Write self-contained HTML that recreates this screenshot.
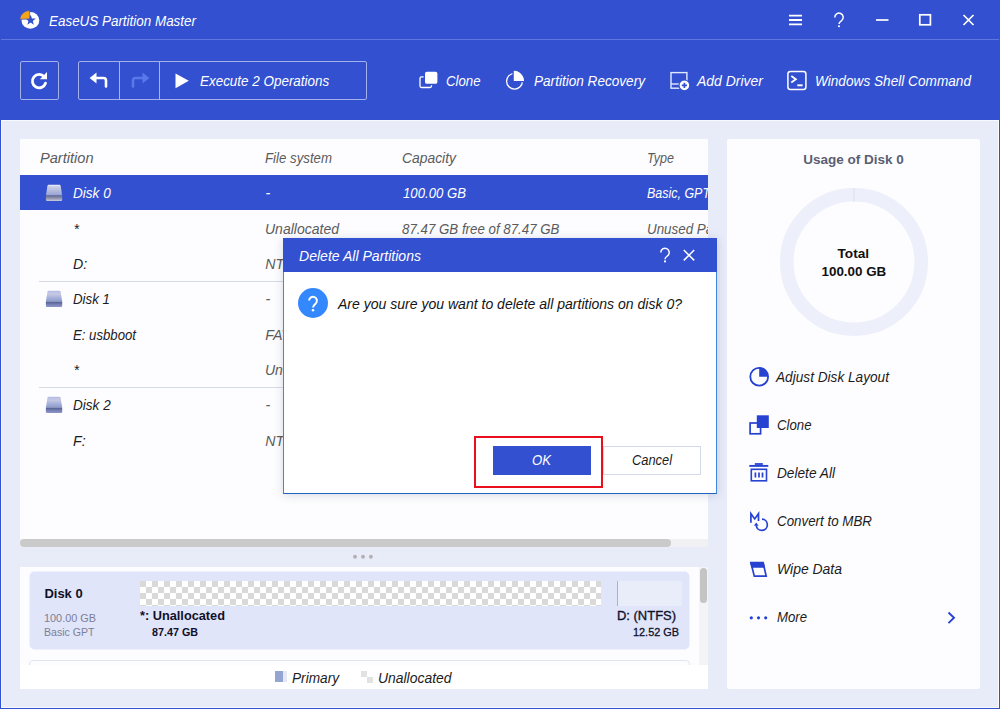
<!DOCTYPE html>
<html>
<head>
<meta charset="utf-8">
<title>EaseUS Partition Master</title>
<style>
*{box-sizing:border-box;margin:0;padding:0}
html,body{width:1000px;height:709px;overflow:hidden}
body{font-family:"Liberation Sans",sans-serif;background:#e8ebf8;position:relative;color:#222}
.abs{position:absolute}
.t{position:absolute;white-space:nowrap;line-height:16px}
.tb{position:absolute;border:1px solid #a3b0ea;border-radius:2px}
.panel{position:absolute;background:#fdfdff}
.dk{position:absolute;width:16px;height:16px;background:linear-gradient(#c9cee8 0%,#b3bade 30%,#8d98c8 62%,#7480b6 72%,#5f6ba3 77%,#8993c3 84%,#7b86b9 100%);border-radius:4px 4px 2px 2px}
.dk.sel{background:linear-gradient(#ced2e2 0%,#b9bed2 30%,#979db8 62%,#868ca8 72%,#71779a 77%,#9aa0bb 84%,#8b91ad 100%)}
.sep{position:absolute;left:39px;width:669px;height:1px;background:#d5dbe6}
</style>
</head>
<body>
<svg width="0" height="0" style="position:absolute">
  <defs>
    <linearGradient id="dt" x1="0" y1="0" x2="0" y2="1"><stop offset="0" stop-color="#b4bbe6"/><stop offset="0.3" stop-color="#c6c9e2"/><stop offset="0.65" stop-color="#a6b0d9"/><stop offset="1" stop-color="#8a9acf"/></linearGradient>
    <linearGradient id="df" x1="0" y1="0" x2="0" y2="1"><stop offset="0" stop-color="#525e8c"/><stop offset="0.3" stop-color="#626ea3"/><stop offset="0.65" stop-color="#7d87ba"/><stop offset="1" stop-color="#8c95c6"/></linearGradient>
    <linearGradient id="st" x1="0" y1="0" x2="0" y2="1"><stop offset="0" stop-color="#eff1fa"/><stop offset="0.18" stop-color="#c9cde6"/><stop offset="0.6" stop-color="#b0b8dc"/><stop offset="1" stop-color="#94a1d2"/></linearGradient>
    <linearGradient id="sf" x1="0" y1="0" x2="0" y2="1"><stop offset="0" stop-color="#666d8e"/><stop offset="0.35" stop-color="#80869f"/><stop offset="0.7" stop-color="#a4a9c0"/><stop offset="1" stop-color="#cacddf"/></linearGradient>
  </defs>
</svg>
<div class="abs" style="left:0;top:0;width:1000px;height:120px;background:#3350d0"></div>
<div class="abs" style="left:0;top:39px;width:1000px;height:1px;background:#5f77dc"></div>

<!-- title -->
<svg class="abs" style="left:18px;top:9px" width="22" height="21" viewBox="-2 -1 22 21">
  <ellipse cx="10.400" cy="10.400" rx="8.900" ry="8.400" fill="#fff"/>
  <path d="M10.60 4.80 L11.95 8.44 L15.83 8.60 L12.79 11.01 L13.83 14.75 L10.60 12.60 L7.37 14.75 L8.41 11.01 L5.37 8.60 L9.25 8.44z" fill="#3350d0"/>
  <path d="M9.500 8.900L-0.300 9.400A9.700 9.700 0 0 1 9.800 0.600z" fill="#f7a416" stroke="#3350d0" stroke-width="0.700"/>
</svg>
<div class="t" style="left:49.00px;top:12.58px;font-size:14.2px;font-style:italic;color:#fff;transform:scaleX(0.9463);transform-origin:0 50%;">EaseUS Partition Master</div>

<!-- window controls -->
<svg class="abs" style="left:780px;top:8px" width="210" height="24" viewBox="0 0 210 24" fill="none" stroke="#fff" stroke-width="1.6">
  <path d="M9 7.600h13M9 12h13M9 16.400h13" stroke-width="1.900"/>
  <path d="M54.800 9.400A4.200 4.200 0 1 1 61.700 12.500C60.200 13.600 59 14.300 59 16" stroke-width="1.500"/>
  <circle cx="59" cy="18.200" r="1.050" fill="#fff" stroke="none"/>
  <path d="M96 12h12.500" stroke-width="1.700"/>
  <rect x="139.800" y="6.800" width="10.600" height="10" stroke-width="1.700"/>
  <path d="M183.500 7l10 10M193.500 7l-10 10" stroke-width="1.700"/>
</svg>

<!-- toolbar -->
<div class="tb" style="left:20px;top:61px;width:39px;height:39px"></div>
<div class="tb" style="left:78px;top:61px;width:289px;height:39px"></div>
<div class="abs" style="left:119px;top:62px;width:1px;height:37px;background:#a9b6ec"></div>
<div class="abs" style="left:159px;top:62px;width:1px;height:37px;background:#a9b6ec"></div>
<svg class="abs" style="left:28px;top:69px" width="24" height="24" viewBox="0 0 24 24" fill="none">
  <path d="M16.300 7.900A6.700 6.700 0 1 0 17.500 14.200" stroke="#fff" stroke-width="2.800" stroke-linecap="round"/>
  <path d="M19 3v7.200h-7.200z" fill="#fff"/>
</svg>
<svg class="abs" style="left:86px;top:69px" width="28" height="24" viewBox="0 0 28 24" fill="none">
  <path d="M9 9h8.500a2.500 2.500 0 0 1 2.500 2.500V17.500" stroke="#fff" stroke-width="2.600" stroke-linecap="round"/>
  <path d="M3.600 9L10.500 3.500v11z" fill="#fff"/>
</svg>
<svg class="abs" style="left:126px;top:69px" width="28" height="24" viewBox="0 0 28 24" fill="none">
  <path d="M18 9H9.500a2.500 2.500 0 0 0-2.500 2.500V17.500" stroke="#5b78ea" stroke-width="2.600" stroke-linecap="round"/>
  <path d="M23.400 9L16.500 3.500v11z" fill="#5b78ea"/>
</svg>
<svg class="abs" style="left:175px;top:73px" width="15" height="16" viewBox="0 0 15 16"><path d="M0.500 0.500L13.800 7.800L0.500 15.200z" fill="#fff"/></svg>
<div class="t" style="left:199.50px;top:72.58px;font-size:14.2px;font-style:italic;color:#fff;transform:scaleX(0.9470);transform-origin:0 50%;">Execute 2 Operations</div>

<svg class="abs" style="left:418px;top:70px" width="22" height="22" viewBox="0 0 22 22" fill="none">
  <rect x="2" y="6.900" width="11.500" height="10.600" rx="1.500" stroke="#fff" stroke-width="1.300"/>
  <rect x="6.300" y="1" width="13.800" height="13.500" rx="2.600" fill="#fff" stroke="#3350d0" stroke-width="1.400"/>
</svg>
<div class="t" style="left:446.00px;top:72.58px;font-size:14.2px;font-style:italic;color:#fff;transform:scaleX(0.9305);transform-origin:0 50%;">Clone</div>

<svg class="abs" style="left:504px;top:69px" width="24" height="24" viewBox="0 0 24 24" fill="none">
  <circle cx="10.500" cy="12.200" r="7.900" stroke="#fff" stroke-width="1.300"/>
  <path d="M9.100 12.600V0.900A11.700 11.700 0 0 1 20.800 12.600z" fill="#fff" stroke="#3350d0" stroke-width="1.300"/>
</svg>
<div class="t" style="left:533.60px;top:72.58px;font-size:14.2px;font-style:italic;color:#fff;transform:scaleX(0.9575);transform-origin:0 50%;">Partition Recovery</div>

<svg class="abs" style="left:668px;top:69px" width="24" height="24" viewBox="0 0 24 24" fill="none">
  <rect x="3" y="3.600" width="15.900" height="15.600" stroke="#e4e8fb" stroke-width="1.400"/>
  <path d="M3 15h15.900" stroke="#e4e8fb" stroke-width="1.400"/>
  <circle cx="16.400" cy="16.400" r="5.400" fill="#fff" stroke="#3350d0" stroke-width="1.200"/>
  <path d="M16.400 13.800v5.200M13.800 16.400h5.200" stroke="#3350d0" stroke-width="1.700"/>
</svg>
<div class="t" style="left:697.00px;top:72.58px;font-size:14.2px;font-style:italic;color:#fff;transform:scaleX(0.9846);transform-origin:0 50%;">Add Driver</div>

<svg class="abs" style="left:785px;top:68px" width="24" height="24" viewBox="0 0 24 24" fill="none">
  <rect x="2.900" y="3.600" width="18" height="17.800" rx="2.500" stroke="#fff" stroke-width="1.500"/>
  <path d="M6.300 8l4.500 3.200-4.500 3.200" stroke="#fff" stroke-width="1.800"/>
  <path d="M12.300 17.300h5.300" stroke="#fff" stroke-width="1.900"/>
</svg>
<div class="t" style="left:815.00px;top:72.58px;font-size:14.2px;font-style:italic;color:#fff;transform:scaleX(0.9611);transform-origin:0 50%;">Windows Shell Command</div>

<!-- table panel -->
<div class="panel" style="left:20px;top:139px;width:688px;height:408px"></div>
<div class="t" style="left:39.50px;top:150.08px;font-size:14.2px;font-style:italic;color:#5b5b5b;transform:scaleX(1.0279);transform-origin:0 50%;">Partition</div>
<div class="t" style="left:265.30px;top:150.08px;font-size:14.2px;font-style:italic;color:#5b5b5b;transform:scaleX(0.9340);transform-origin:0 50%;">File system</div>
<div class="t" style="left:401.50px;top:150.08px;font-size:14.2px;font-style:italic;color:#5b5b5b;transform:scaleX(0.9782);transform-origin:0 50%;">Capacity</div>
<div class="t" style="left:647.40px;top:150.08px;font-size:14.2px;font-style:italic;color:#5b5b5b;transform:scaleX(0.8852);transform-origin:0 50%;">Type</div>

<div class="abs" style="left:20px;top:175px;width:688px;height:35px;background:#3350d0"></div>
<svg class="abs" style="left:45px;top:184px" width="18" height="18" viewBox="0 0 18 18">
  <path d="M3.800 0.800h10.500a1.400 1.400 0 0 1 1.400 1.100l1.500 9.700H0.900l1.500-9.700a1.400 1.400 0 0 1 1.400-1.100z" fill="url(#st)"/>
  <path d="M0.900 11.500h16.300v4.300a1.200 1.200 0 0 1-1.200 1.200H2.100a1.200 1.200 0 0 1-1.200-1.200z" fill="url(#sf)"/>
</svg>
<div class="t" style="left:73.00px;top:185.08px;font-size:14.2px;font-style:italic;color:#fff;transform:scaleX(0.9563);transform-origin:0 50%;">Disk 0</div>
<div class="t" style="left:265.50px;top:185.08px;font-size:14.2px;font-style:italic;color:#fff;">-</div>
<div class="t" style="left:402.50px;top:185.08px;font-size:14.2px;font-style:italic;color:#fff;transform:scaleX(0.9286);transform-origin:0 50%;">100.00 GB</div>
<div class="abs" style="left:640px;top:185.08px;width:68px;height:16px;overflow:hidden"><div class="t" style="left:7.40px;top:0;font-size:14.2px;font-style:italic;color:#fff;transform:scaleX(0.8780);transform-origin:0 50%;">Basic, GPT</div></div>

<div class="t" style="left:73.50px;top:220.58px;font-size:14.2px;font-style:italic;color:#1c1c1c;">*</div>
<div class="t" style="left:265.30px;top:220.58px;font-size:14.2px;font-style:italic;color:#5b5b5b;transform:scaleX(0.9875);transform-origin:0 50%;">Unallocated</div>
<div class="t" style="left:401.50px;top:220.58px;font-size:14.2px;font-style:italic;color:#5b5b5b;transform:scaleX(0.9375);transform-origin:0 50%;">87.47 GB free of 87.47 GB</div>
<div class="abs" style="left:640px;top:220.58px;width:68px;height:16px;overflow:hidden"><div class="t" style="left:7.40px;top:0;font-size:14.2px;font-style:italic;color:#5b5b5b;transform:scaleX(0.9438);transform-origin:0 50%;">Unused Partition</div></div>

<div class="t" style="left:73.00px;top:256.08px;font-size:14.2px;font-style:italic;color:#1c1c1c;">D:</div>
<div class="t" style="left:265.30px;top:256.08px;font-size:14.2px;font-style:italic;color:#5b5b5b;">NTFS</div>

<div class="sep" style="top:281px"></div>
<svg class="abs" style="left:45px;top:290px" width="18" height="18" viewBox="0 0 18 18">
  <path d="M3.800 0.800h10.500a1.400 1.400 0 0 1 1.400 1.100l1.500 9.700H0.900l1.500-9.700a1.400 1.400 0 0 1 1.400-1.100z" fill="url(#dt)"/>
  <path d="M0.900 11.500h16.300v4.300a1.200 1.200 0 0 1-1.200 1.200H2.100a1.200 1.200 0 0 1-1.200-1.200z" fill="url(#df)"/>
</svg>
<div class="t" style="left:73.00px;top:291.08px;font-size:14.2px;font-style:italic;color:#1c1c1c;transform:scaleX(0.9386);transform-origin:0 50%;">Disk 1</div>
<div class="t" style="left:265.50px;top:291.08px;font-size:14.2px;font-style:italic;color:#5b5b5b;">-</div>

<div class="t" style="left:73.00px;top:326.58px;font-size:14.2px;font-style:italic;color:#1c1c1c;transform:scaleX(0.9286);transform-origin:0 50%;">E: usbboot</div>
<div class="t" style="left:265.30px;top:326.58px;font-size:14.2px;font-style:italic;color:#5b5b5b;">FAT32</div>

<div class="t" style="left:73.50px;top:362.08px;font-size:14.2px;font-style:italic;color:#1c1c1c;">*</div>
<div class="t" style="left:265.30px;top:362.08px;font-size:14.2px;font-style:italic;color:#5b5b5b;transform:scaleX(0.9875);transform-origin:0 50%;">Unallocated</div>

<div class="sep" style="top:387px"></div>
<svg class="abs" style="left:45px;top:396px" width="18" height="18" viewBox="0 0 18 18">
  <path d="M3.800 0.800h10.500a1.400 1.400 0 0 1 1.400 1.100l1.500 9.700H0.900l1.500-9.700a1.400 1.400 0 0 1 1.400-1.100z" fill="url(#dt)"/>
  <path d="M0.900 11.500h16.300v4.300a1.200 1.200 0 0 1-1.200 1.200H2.100a1.200 1.200 0 0 1-1.200-1.200z" fill="url(#df)"/>
</svg>
<div class="t" style="left:73.00px;top:397.08px;font-size:14.2px;font-style:italic;color:#1c1c1c;transform:scaleX(0.9563);transform-origin:0 50%;">Disk 2</div>
<div class="t" style="left:265.50px;top:397.08px;font-size:14.2px;font-style:italic;color:#5b5b5b;">-</div>

<div class="t" style="left:73.00px;top:432.58px;font-size:14.2px;font-style:italic;color:#1c1c1c;">F:</div>
<div class="t" style="left:265.30px;top:432.58px;font-size:14.2px;font-style:italic;color:#5b5b5b;">NTFS</div>

<!-- h scrollbar -->
<div class="abs" style="left:20px;top:539px;width:688px;height:8px;background:#f1f1f4"></div>
<div class="abs" style="left:20px;top:539px;width:651px;height:8px;background:#cacaca;border-radius:4px"></div>
<!-- splitter dots -->
<svg class="abs" style="left:350px;top:552px" width="26" height="10" viewBox="0 0 26 10" fill="#b3aeb3"><circle cx="5" cy="4.750" r="1.900"/><circle cx="13" cy="4.750" r="1.900"/><circle cx="20.900" cy="4.750" r="1.900"/></svg>

<!-- right panel -->
<div class="panel" style="left:727px;top:139px;width:253px;height:550px;border-radius:2px"></div>
<div class="t" style="left:805.09px;top:151.80px;font-size:13px;font-weight:bold;color:#5a5f72;transform:scaleX(1.0379);transform-origin:50% 50%;">Usage of Disk 0</div>
<svg class="abs" style="left:774px;top:182px" width="160" height="160" viewBox="0 0 160 160">
  <circle cx="80" cy="80" r="67.200" fill="none" stroke="#edf0fa" stroke-width="13.600"/>
  <path d="M80 6v13.600" stroke="#d6dcef" stroke-width="0.900"/>
</svg>
<div class="t" style="left:837.93px;top:245.73px;font-size:13.2px;font-weight:bold;color:#111;transform:scaleX(1.0350);transform-origin:50% 50%;">Total</div>
<div class="t" style="left:822.11px;top:263.93px;font-size:13.2px;font-weight:bold;color:#111;transform:scaleX(1.0160);transform-origin:50% 50%;">100.00 GB</div>

<svg class="abs" style="left:747px;top:364px" width="24" height="24" viewBox="0 0 24 24" fill="none">
  <circle cx="12.200" cy="12.700" r="8.900" stroke="#2742d0" stroke-width="1.800"/>
  <path d="M12.200 12.700V3.800A8.900 8.900 0 0 1 21.100 12.700z" fill="#2742d0"/>
</svg>
<div class="t" style="left:776.30px;top:368.78px;font-size:14.2px;font-style:italic;color:#1c1c1c;transform:scaleX(0.9617);transform-origin:0 50%;">Adjust Disk Layout</div>

<svg class="abs" style="left:747px;top:413px" width="24" height="24" viewBox="0 0 24 24" fill="none">
  <rect x="3.100" y="10" width="10.500" height="10.800" stroke="#2742d0" stroke-width="1.700" fill="#fdfdff"/>
  <rect x="9.800" y="2.300" width="12" height="12.700" fill="#2742d0"/>
</svg>
<div class="t" style="left:776.50px;top:416.78px;font-size:14.2px;font-style:italic;color:#1c1c1c;transform:scaleX(0.9305);transform-origin:0 50%;">Clone</div>

<svg class="abs" style="left:747px;top:461px" width="24" height="24" viewBox="0 0 24 24" fill="none" stroke="#2742d0">
  <path d="M2.300 4.900h19" stroke-width="1.900"/>
  <path d="M7.800 3h8" stroke-width="1.800"/>
  <rect x="4.300" y="8.300" width="15.200" height="11.500" stroke-width="1.600"/>
  <path d="M8.400 11.600v5M12 11.600v5M15.500 11.600v5" stroke-width="1.700"/>
</svg>
<div class="t" style="left:776.50px;top:464.78px;font-size:14.2px;font-style:italic;color:#1c1c1c;transform:scaleX(0.9634);transform-origin:0 50%;">Delete All</div>

<svg class="abs" style="left:747px;top:509px" width="26" height="24" viewBox="0 0 26 24" fill="none" stroke="#2742d0">
  <path d="M3.900 13.700V4.700l3.800 5.200 3.800-5.200v7.400" stroke-width="1.700" stroke-linejoin="miter"/>
  <path d="M15 10.150A5.600 5.600 0 1 1 9.200 16.400" stroke-width="1.700"/>
  <path d="M6.900 16.800h4.700l-2.400-3.300z" fill="#2742d0" stroke="none"/>
</svg>
<div class="t" style="left:776.50px;top:512.78px;font-size:14.2px;font-style:italic;color:#1c1c1c;transform:scaleX(0.9413);transform-origin:0 50%;">Convert to MBR</div>

<svg class="abs" style="left:747px;top:557px" width="24" height="24" viewBox="0 0 24 24" fill="none">
  <path d="M3.900 5.700H16.100L19.200 19.100H7.300z" stroke="#2742d0" stroke-width="1.700" stroke-linejoin="miter"/>
  <path d="M2.900 4.900H16.700L18.100 10.800H4.400z" fill="#2742d0"/>
</svg>
<div class="t" style="left:776.50px;top:560.78px;font-size:14.2px;font-style:italic;color:#1c1c1c;transform:scaleX(0.9832);transform-origin:0 50%;">Wipe Data</div>

<svg class="abs" style="left:747px;top:605px" width="24" height="24" viewBox="0 0 24 24" fill="#2742d0">
  <circle cx="4.300" cy="12.800" r="1.600"/><circle cx="11.500" cy="12.800" r="1.600"/><circle cx="18.700" cy="12.800" r="1.600"/>
</svg>
<div class="t" style="left:776.50px;top:608.78px;font-size:14.2px;font-style:italic;color:#1c1c1c;transform:scaleX(0.9280);transform-origin:0 50%;">More</div>
<svg class="abs" style="left:944px;top:608px" width="14" height="20" viewBox="0 0 14 20" fill="none"><path d="M4.500 4.500l5.500 5.300-5.500 5.300" stroke="#2742d0" stroke-width="1.900"/></svg>

<!-- disk map -->
<div class="panel" style="left:20px;top:567px;width:688px;height:122px;background:#fdfdff"></div>
<div class="abs" style="left:29px;top:571px;width:660px;height:78px;background:#e1e5f9;border-radius:5px;transform:translate(0.500px,0.500px)"></div>
<div class="abs" style="left:29px;top:660px;width:661px;height:20px;border:1px solid #dfe3f5;border-radius:4px;background:#fdfdff"></div>
<div class="abs" style="left:20px;top:665px;width:688px;height:24px;background:#fff"></div>
<!-- v scrollbar -->
<div class="abs" style="left:699px;top:567px;width:9px;height:98px;background:#f4f4f7"></div>
<div class="abs" style="left:700px;top:568px;width:7px;height:35px;background:#c4c4c4;border-radius:4px"></div>
<div class="t" style="left:44.40px;top:585.80px;font-size:13px;font-weight:bold;color:#10102a;">Disk 0</div>
<div class="t" style="left:44.40px;top:609.58px;font-size:11.3px;color:#7b8098;transform:scaleX(0.9627);transform-origin:0 50%;">100.00 GB</div>
<div class="t" style="left:44.40px;top:623.68px;font-size:11.3px;color:#7b8098;transform:scaleX(0.9333);transform-origin:0 50%;">Basic GPT</div>
<div class="abs" style="left:140px;top:581px;width:461px;height:25px;background-color:#fff;background-image:conic-gradient(#fff 25%,#d9d9d9 0 50%,#fff 0 75%,#d9d9d9 0);background-size:12px 12px;background-position:0 0"></div>
<div class="abs" style="left:617px;top:581px;width:65px;height:25px;background:#e9ecf9;border-left:1px solid #a3b2e2"></div>
<div class="t" style="left:140.40px;top:607.90px;font-size:13px;font-weight:bold;color:#10102a;transform:scaleX(0.9805);transform-origin:0 50%;">*: Unallocated</div>
<div class="t" style="left:152.00px;top:624.08px;font-size:11.3px;font-weight:bold;color:#10102a;transform:scaleX(0.9512);transform-origin:0 50%;">87.47 GB</div>
<div class="t" style="left:617.00px;top:607.90px;font-size:13px;color:#10102a;transform:scaleX(0.9963);transform-origin:0 50%;-webkit-text-stroke:0.35px #10102a;">D: (NTFS)</div>
<div class="t" style="left:633.00px;top:624.08px;font-size:11.3px;color:#10102a;transform:scaleX(0.9637);transform-origin:0 50%;-webkit-text-stroke:0.3px #10102a;">12.52 GB</div>
<!-- legend -->
<div class="abs" style="left:275px;top:671px;width:8px;height:11px;background:#94a5d2"></div>
<div class="abs" style="left:283px;top:671px;width:4px;height:11px;background:#e6e9f5"></div>
<div class="t" style="left:292.00px;top:669.58px;font-size:14.2px;font-style:italic;color:#1c1c1c;transform:scaleX(0.9616);transform-origin:0 50%;">Primary</div>
<div class="abs" style="left:361px;top:671px;width:12px;height:12px;background-color:#fff;background-image:conic-gradient(#fff 25%,#e2e2e2 0 50%,#fff 0 75%,#e2e2e2 0);background-size:12px 12px"></div>
<div class="t" style="left:378.40px;top:669.58px;font-size:14.2px;font-style:italic;color:#1c1c1c;transform:scaleX(0.9808);transform-origin:0 50%;">Unallocated</div>

<!-- dialog -->
<div class="abs" style="left:283px;top:238px;width:434px;height:256px;background:#fff;border:1px solid #3d87e2;border-bottom-color:#1e62c2;box-shadow:0 1px 9px rgba(60,70,110,0.2)"></div>
<div class="abs" style="left:283px;top:238px;width:434px;height:34px;background:#3350d0"></div>
<div class="t" style="left:298.70px;top:247.68px;font-size:14.2px;font-style:italic;color:#fff;transform:scaleX(0.9896);transform-origin:0 50%;">Delete All Partitions</div>
<svg class="abs" style="left:654px;top:244px" width="46" height="22" viewBox="0 0 46 22" fill="none" stroke="#fff" stroke-width="1.5">
  <path d="M6.800 8.600A4.200 4.200 0 1 1 13.700 11.700C12.200 12.800 11 13.500 11 15.200"/>
  <circle cx="11" cy="17.400" r="1.050" fill="#fff" stroke="none"/>
  <path d="M29.800 6l10.400 10.400M40.200 6l-10.400 10.400" stroke-width="1.500"/>
</svg>
<div class="abs" style="left:298px;top:288px;width:30px;height:30px;border-radius:50%;background:#3388fe"></div>
<svg class="abs" style="left:303px;top:292px" width="20" height="24" viewBox="0 0 20 24" fill="none" stroke="#fff" stroke-width="2">
  <path d="M6.100 8.600A3.900 3.900 0 1 1 12.700 11.500C11.100 12.800 10 13.600 10 15.600"/>
  <circle cx="10" cy="18.200" r="1.250" fill="#fff" stroke="none"/>
</svg>
<div class="t" style="left:337.50px;top:296.38px;font-size:14.2px;font-style:italic;color:#141414;transform:scaleX(0.9891);transform-origin:0 50%;">Are you sure you want to delete all partitions on disk 0?</div>
<div class="abs" style="left:493px;top:446px;width:98px;height:29px;background:#3350d0"></div>
<div class="t" style="left:532.40px;top:452.48px;font-size:14.2px;font-style:italic;color:#fff;transform:scaleX(0.9268);transform-origin:0 50%;">OK</div>
<div class="abs" style="left:603px;top:446px;width:98px;height:29px;background:#fff;border:1px solid #d3d9ea"></div>
<div class="t" style="left:631.60px;top:452.48px;font-size:14.2px;font-style:italic;color:#1c1c1c;transform:scaleX(0.9056);transform-origin:0 50%;">Cancel</div>
<div class="abs" style="left:474px;top:436px;width:129px;height:52px;border:2px solid #e8111b"></div>

<!-- window frame -->
<div class="abs" style="left:1px;top:120px;width:998px;height:588px;border:1px solid #f8f9fe;border-right-color:#fbfbff"></div>
<div class="abs" style="left:0;top:0;width:1px;height:709px;background:#3350d0"></div>
<div class="abs" style="left:999px;top:0;width:1px;height:709px;background:#3350d0"></div>
<div class="abs" style="left:0;top:708px;width:1000px;height:1px;background:#3350d0"></div>

</body>
</html>
